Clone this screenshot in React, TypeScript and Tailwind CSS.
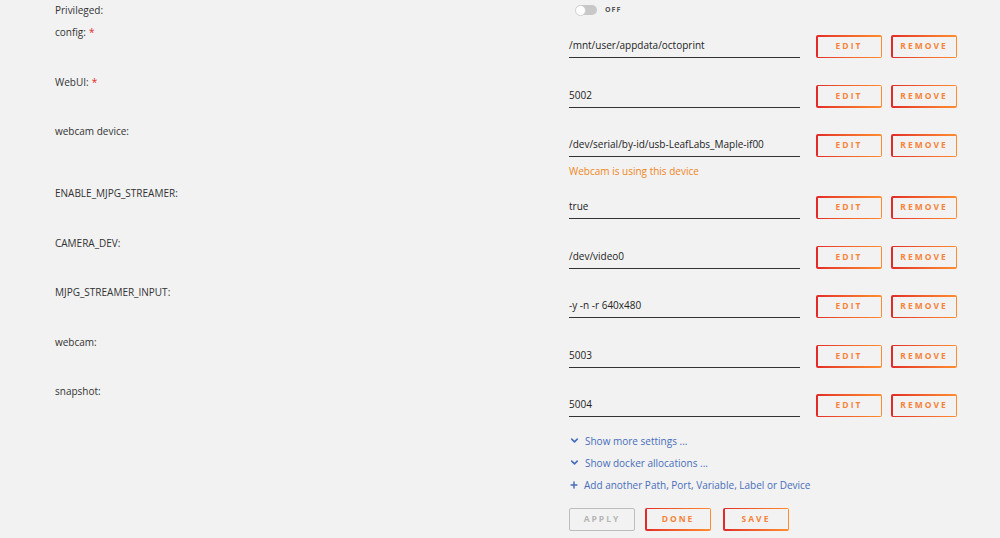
import React from 'react';
import { ChevronDown, Plus } from 'lucide-react';

type Row = { label: string; value: string; required?: boolean; note?: string };

const rows: Row[] = [
    { label: 'config:', value: '/mnt/user/appdata/octoprint', required: true },
    { label: 'WebUI:', value: '5002', required: true },
    { label: 'webcam device:', value: '/dev/serial/by-id/usb-LeafLabs_Maple-if00', note: 'Webcam is using this device' },
    { label: 'ENABLE_MJPG_STREAMER:', value: 'true' },
    { label: 'CAMERA_DEV:', value: '/dev/video0' },
    { label: 'MJPG_STREAMER_INPUT:', value: '-y -n -r 640x480' },
    { label: 'webcam:', value: '5003' },
    { label: 'snapshot:', value: '5004' },
];

const GradButton: React.FC<{ text: string; disabled?: boolean }> = ({ text, disabled }) => {
    if (disabled) {
        return (
            <div className="w-[66px] h-[23px] border-[1.5px] border-[#bdbdbd] rounded-[2px] flex items-center justify-center text-[8.5px] font-bold tracking-[2px] text-[#b5b5b5]">
                {text}
            </div>
        );
    }
    return (
        <div className="w-[66px] h-[23px] p-[1.5px] rounded-[2px] bg-gradient-to-r from-[#e22828] to-[#ff8c2f]">
            <div className="w-full h-full bg-[#f2f2f2] flex items-center justify-center">
                <span className="text-[8.5px] font-bold tracking-[2px] text-[#f5843a]">
                    {text}
                </span>
            </div>
        </div>
    );
};

const App: React.FC = () => {
    return (
        <div className="w-[1000px] h-[538px] bg-[#f2f2f2] text-[#333] overflow-hidden" style={{ fontFamily: '"Open Sans", "Noto Sans", sans-serif' }}>
            <div className="pt-px">
                {/* Privileged */}
                <div className="flex h-[22px]">
                    <div className="w-[576px] pl-[55px] text-[10px] leading-[18px]">Privileged:</div>
                    <div className="flex items-center h-[18px] gap-[8px]">
                        <div className="relative w-[21px] h-[10px] rounded-full bg-[#c8c8c8]">
                            <div className="absolute -left-px -top-[0.5px] w-[11px] h-[11px] rounded-full bg-white border border-[#d0d0d0]" />
                        </div>
                        <span className="text-[7px] font-bold tracking-[1px] text-[#555]">OFF</span>
                    </div>
                </div>

                {rows.map((r, i) => (
                    <div key={i} className={`flex ${r.note ? 'h-[62px]' : 'h-[49.5px]'}`}>
                        <div className="w-[569px] pl-[55px] text-[10px] leading-[18px]">
                            {r.label}
                            {r.required && <span className="text-[#e22828] ml-[3px]">*</span>}
                        </div>
                        <div className="flex flex-col pt-[12px]">
                            <div className="flex items-end">
                                <div className="w-[231px] h-[23px] border-b border-[#333] text-[10px] text-[#222] leading-[18px] pt-[1px] whitespace-nowrap">
                                    {r.value}
                                </div>
                                <div className="ml-[16px] flex gap-[9px]">
                                    <GradButton text="EDIT" />
                                    <GradButton text="REMOVE" />
                                </div>
                            </div>
                            {r.note && (
                                <div className="mt-[5px] text-[10px] leading-[18px] text-[#f0861a]">{r.note}</div>
                            )}
                        </div>
                    </div>
                ))}

                <div className="pl-[569px] -mt-[2px] flex flex-col text-[10px] leading-[18px] text-[#486dba]">
                    <div className="flex items-center gap-[5px] h-[22px]">
                        <ChevronDown size={11} strokeWidth={3.5} />
                        <span>Show more settings ...</span>
                    </div>
                    <div className="flex items-center gap-[5px] h-[22px]">
                        <ChevronDown size={11} strokeWidth={3.5} />
                        <span>Show docker allocations ...</span>
                    </div>
                    <div className="flex items-center gap-[5px] h-[22px]">
                        <Plus size={10} strokeWidth={3.5} />
                        <span>Add another Path, Port, Variable, Label or Device</span>
                    </div>
                    <div className="flex gap-[10px] mt-[12px]">
                        <GradButton text="APPLY" disabled />
                        <GradButton text="DONE" />
                        <div className="ml-[2px]">
                            <GradButton text="SAVE" />
                        </div>
                    </div>
                </div>
            </div>
        </div>
    );
};

export default App;
